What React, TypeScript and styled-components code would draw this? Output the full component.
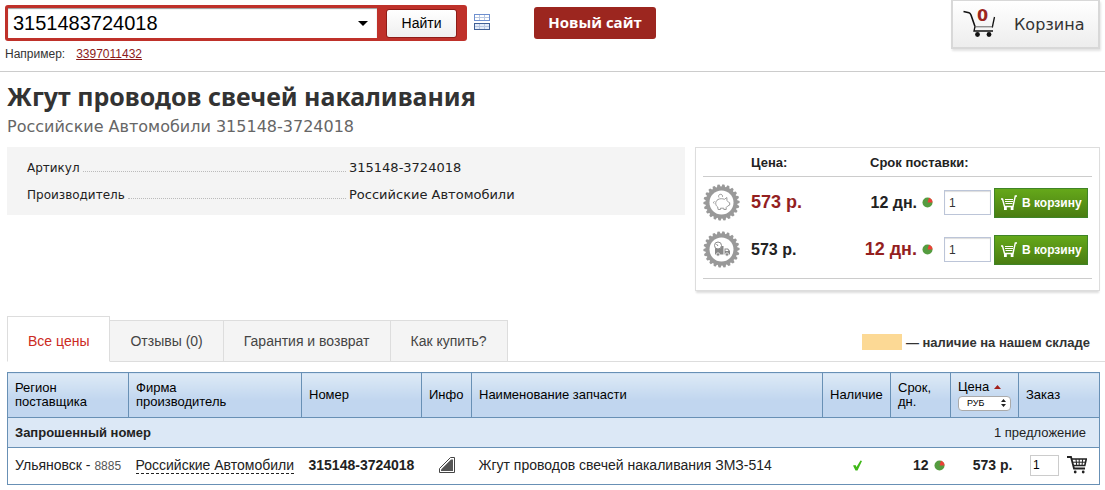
import React from 'react';
import styled, { createGlobalStyle } from 'styled-components';

const GlobalStyle = createGlobalStyle`
  *, *::before, *::after { box-sizing: border-box; }
  body {
    margin: 0;
    background: #fff;
    color: #222;
    font-family: "Liberation Sans", Arial, sans-serif;
    font-size: 14px;
  }
  button, input, select { font-family: inherit; margin: 0; }
  svg { display: block; flex: none; }
`;

const verdana = '"DejaVu Sans", Verdana, sans-serif';

/* ---------- Header ---------- */

const Header = styled.header`
  display: flex;
  align-items: flex-start;
  justify-content: space-between;
  height: 72px;
  padding: 0 5px;
  border-bottom: 1px solid #ccc;
`;

const HeaderLeft = styled.div`
  display: flex;
  align-items: flex-start;
  padding-top: 5px;
`;

const SearchForm = styled.form`
  width: 462px;
`;

const SearchBox = styled.div`
  display: flex;
  align-items: center;
  gap: 9px;
  height: 36px;
  padding: 3px 10px 3px 3px;
  border-radius: 3px;
  background: #bf312a;
`;

const SearchField = styled.div`
  display: flex;
  flex: 1;
  height: 30px;
  background: #fff;
  box-shadow: inset 0 1px 1px #999;
`;

const SearchInput = styled.input`
  flex: 1;
  min-width: 0;
  padding: 0 5px;
  border: 0;
  outline: 0;
  background: transparent;
  color: #000;
  font-size: 20px;
`;

const HistoryButton = styled.button`
  display: flex;
  align-items: center;
  justify-content: center;
  width: 28px;
  padding: 0;
  border: 0;
  background: transparent;
`;

const FindButton = styled.button`
  width: 71px;
  height: 29px;
  padding: 0;
  border: 1px solid #8d1c17;
  border-radius: 3px;
  background: linear-gradient(#fff, #efefef);
  color: #000;
  font-size: 14px;
`;

const Example = styled.p`
  display: flex;
  gap: 11px;
  margin: 5px 0 0;
  font-size: 12px;
  line-height: 16px;
  color: #333;
`;

const ExampleLink = styled.a`
  color: #8b1a1a;
`;

const ListButton = styled.button`
  margin: 9px 44px 0 7px;
  padding: 0;
  border: 0;
  background: transparent;
`;

const NewSiteLink = styled.a`
  width: 122px;
  height: 32px;
  margin-top: 2px;
  border-radius: 3px;
  background: #9c261f;
  color: #fff;
  font: bold 15px/31px "Open Sans", "Noto Sans", sans-serif;
  text-align: center;
  text-decoration: none;
`;

const CartLink = styled.a`
  position: relative;
  display: flex;
  align-items: center;
  gap: 17px;
  width: 149px;
  height: 49px;
  padding-left: 10px;
  border: 2px solid #d8d8d8;
  border-top-width: 1px;
  background: linear-gradient(#fff, #ededed);
  box-shadow: 1px 2px 2px #e4e4e4;
  color: #333;
  font: 16px ${verdana};
  text-decoration: none;
`;

const CartCount = styled.span`
  position: absolute;
  top: 5px;
  left: 24px;
  color: #9c261f;
  font: bold 16px/20px ${verdana};
`;

/* ---------- Product ---------- */

const Main = styled.main`
  padding: 0 5px 0 7px;
`;

const Title = styled.h1`
  margin: 8px 0 0;
  color: #333;
  font: bold 25px/32px "Noto Sans", "Open Sans", sans-serif;
`;

const Subtitle = styled.h2`
  margin: 5px 0 0;
  color: #666;
  font: 16px/20px ${verdana};
`;

const Product = styled.section`
  display: flex;
  align-items: flex-start;
  gap: 10px;
  margin-top: 10px;
`;

const Specs = styled.dl`
  display: grid;
  flex: 1;
  gap: 9px;
  margin: 0;
  padding: 12px 20px 11px;
  background: #f4f4f4;
  font: 13px/18px ${verdana};
`;

const Spec = styled.div`
  display: flex;
`;

const SpecName = styled.dt`
  display: flex;
  gap: 3px;
  width: 322px;
  padding-right: 3px;
  font-size: 12px;
  &::after {
    content: "";
    flex: 1;
    height: 13px;
    border-bottom: 1px dotted #bbb;
  }
`;

const SpecValue = styled.dd`
  margin: 0;
`;

const OfferPanel = styled.div`
  width: 405px;
  padding: 0 7px 11px;
  border: 1px solid #ddd;
  box-shadow: 0 3px 2px -1px #ddd;
`;

const OfferTable = styled.table`
  width: 100%;
  border-bottom: 1px solid #ccc;
  border-spacing: 0;
  table-layout: fixed;
  tbody::before { content: ""; display: block; height: 2px; }
  tbody::after { content: ""; display: block; height: 5px; }
`;

const OfferHead = styled.th<{ $indent?: number }>`
  height: 29px;
  padding: 0 0 0 ${(p) => p.$indent ?? 0}px;
  border-bottom: 1px solid #ccc;
  font-size: 13px;
  text-align: left;
`;

const OfferCell = styled.td`
  height: 47px;
  padding: 0;
`;

const Amount = styled.span<{ $best?: boolean }>`
  color: ${(p) => (p.$best ? '#941f1f' : '#222')};
  font-size: ${(p) => (p.$best ? 18 : 16)}px;
  font-weight: bold;
  white-space: nowrap;
`;

const Term = styled.div`
  display: flex;
  align-items: center;
  justify-content: flex-end;
  gap: 5px;
  padding-right: 11px;
`;

const OfferQty = styled.input`
  display: block;
  width: 47px;
  height: 25px;
  padding: 0 4px;
  border: 1px solid #bcc5d8;
  box-shadow: inset 0 1px 1px #ddd;
  color: #333;
  font-size: 12px;
`;

const BuyButton = styled.button`
  display: flex;
  align-items: center;
  gap: 5px;
  width: 94px;
  height: 30px;
  padding: 0 0 0 6px;
  border: 1px solid #3f8427;
  background: linear-gradient(#65a81a, #4a7d12);
  color: #fff;
  font-size: 12px;
  font-weight: bold;
  white-space: nowrap;
`;

/* ---------- Tabs ---------- */

const TabBar = styled.div`
  display: flex;
  align-items: flex-end;
  justify-content: space-between;
  margin: 25px -5px 0 0;
  padding-right: 15px;
  border-bottom: 1px solid #ddd;
`;

const Tabs = styled.div`
  display: flex;
  align-items: flex-end;
  margin-bottom: -1px;
`;

const Tab = styled.button<{ $active?: boolean }>`
  height: ${(p) => (p.$active ? 46 : 42)}px;
  padding: ${(p) => (p.$active ? '4px 20px 0' : '0 20px')};
  border: 1px solid #ddd;
  border-bottom-color: ${(p) => (p.$active ? '#fff' : '#ddd')};
  border-left-width: ${(p) => (p.$active ? 1 : 0)}px;
  background: ${(p) => (p.$active ? '#fff' : '#f4f4f4')};
  color: ${(p) => (p.$active ? '#cc2a22' : '#444')};
  font-size: 14px;
`;

const Legend = styled.p`
  display: flex;
  align-items: center;
  gap: 4px;
  margin: 0 0 11px;
  color: #333;
  font-size: 13px;
  font-weight: bold;
`;

const Swatch = styled.span`
  width: 40px;
  height: 16px;
  background: #fcd995;
`;

/* ---------- Price table ---------- */

const line = '1px solid #6890b5';

const PriceTable = styled.table`
  width: 100%;
  margin-top: 10px;
  border-collapse: collapse;
  table-layout: fixed;
`;

const HeadCell = styled.th`
  height: 45px;
  padding: 0 7px;
  border: ${line};
  background: linear-gradient(#deeaf6, #c1d6ef 60%);
  color: #000;
  font-size: 13px;
  font-weight: normal;
  line-height: 14px;
  text-align: left;
`;

const GroupRow = styled.tr`
  height: 30px;
  border: ${line};
  background: #dce8f6;
  font-size: 13px;
`;

const GroupName = styled.th`
  padding: 0 7px;
  text-align: left;
`;

const GroupCount = styled.td`
  padding: 0 13px;
  text-align: right;
`;

const DataRow = styled.tr`
  height: 37px;
  border: ${line};
`;

const Cell = styled.td<{ $align?: string; $bold?: boolean }>`
  padding: 0 6px 2px 7px;
  font-weight: ${(p) => (p.$bold ? 'bold' : 'normal')};
  text-align: ${(p) => p.$align ?? 'left'};
  white-space: nowrap;
`;

const OrderCell = styled(Cell)`
  padding-right: 12px;
`;

const Code = styled.span`
  color: #555;
  font-size: 12px;
`;

const MakerLink = styled.a`
  border-bottom: 1px dashed #222;
  color: inherit;
  text-decoration: none;
`;

const Inline = styled.div<{ $justify?: string; $gap?: number }>`
  display: flex;
  align-items: center;
  justify-content: ${(p) => p.$justify ?? 'flex-start'};
  gap: ${(p) => p.$gap ?? 5}px;
`;

const CurrencyWrap = styled.div`
  display: flex;
  align-items: center;
  margin-top: 2px;
  padding-right: 4px;
  width: 53px;
  height: 15px;
  border: 1px solid #aaa;
  border-radius: 4px;
  background: #fff;
`;

const CurrencySelect = styled.select`
  flex: 1;
  min-width: 0;
  height: 13px;
  padding: 0 0 0 8px;
  appearance: none;
  border: 0;
  background: transparent;
  color: #000;
  font-size: 9px;
`;

const RowQty = styled.input`
  width: 29px;
  height: 21px;
  padding: 0 2px;
  border: 1px solid #ccc;
  font-size: 12px;
`;

const IconButton = styled.button`
  padding: 0;
  border: 0;
  background: transparent;
`;

/* ---------- Icons ---------- */

const GridIcon = () => (
  <svg width="16" height="16" viewBox="0 0 16 16">
    {[0, 9].map((y) => (
      <g key={y}>
        <rect x="0" y={y} width="16" height="7" fill={y ? '#3f5f96' : '#6d8fcf'} />
        <rect x="1" y={y + 1} width="14" height="5" fill="#b9c8e2" />
        <path
          d={`M1 ${y + 1}h4v2h-4z M6 ${y + 1}h4v2h-4z M11 ${y + 1}h4v2h-4z M1 ${y + 4}h4v2h-4z M6 ${y + 4}h4v2h-4z M11 ${y + 4}h4v2h-4z`}
          fill={y ? '#e3ebf8' : '#fff'}
        />
      </g>
    ))}
  </svg>
);

const BigCart = () => (
  <svg width="34" height="28" viewBox="0 0 34 28" fill="none" stroke="#111">
    <path d="M.5 1.500l5.500 1.300c1 .3 1.500 1 2 2.200l4 11.500" strokeWidth="1.600" />
    <path d="M29.300 17.500l.7-3.500 1.500-7" strokeWidth="1.300" />
    <path d="M12 16.800h17.300" stroke="#666" />
    <path d="M12 16.500l-1 4.500h19" strokeWidth="1.300" />
    <circle cx="14.500" cy="24.500" r="2.400" fill="#111" stroke="none" />
    <circle cx="26" cy="24.500" r="2.400" fill="#111" stroke="none" />
  </svg>
);

const TEETH = 22;
const gearPoints = Array.from({ length: TEETH }, (_, i) => {
  const at = (r: number, t: number) => {
    const a = ((i + t) / TEETH) * Math.PI * 2;
    return `${(18.5 + r * Math.sin(a)).toFixed(2)},${(18.5 - r * Math.cos(a)).toFixed(2)}`;
  };
  return [at(16, 0), at(18.2, 0.2), at(18, 0.6), at(16, 0.8)].join(' ');
}).join(' ');

const Gear = ({ children }: { children: React.ReactNode }) => (
  <svg width="37" height="37" viewBox="0 0 37 37">
    <polygon points={gearPoints} fill="#999" />
    <circle cx="18.500" cy="18.500" r="12" fill="#fff" />
    {children}
  </svg>
);

const PiggyGear = () => (
  <Gear>
    <g fill="none" stroke="#999" strokeWidth="1">
      <path d="M15 15.500c2-1 4.500-1 6.500-.2l2.300-1.800.2 3 1.800 2 .9.300v2.200l-2 1-1.500 1.500v2h-2.400v-1.300h-3.300v1.300h-2.400l-.4-2.500c-2.700-1.800-2.700-5.700.3-7.500z" />
      <path d="M16 13.500a2 2 0 1 1 3.500-.7M11.500 17.500c-1.200.2-1.300 1.800-.2 2" />
    </g>
  </Gear>
);

const TruckGear = () => (
  <Gear>
    <g fill="#888">
      <path d="M12 15h8.500v8.500H12z M21.500 17.500h3.500l2 2.500v3.500h-5.500z" />
      <circle cx="15" cy="14.500" r="3.500" fill="#fff" stroke="#888" />
      <path d="M15 15l-1.500-2" stroke="#888" fill="none" />
      <path d="M22.500 18.500h2l1 1.500h-3z" fill="#fff" />
      <circle cx="15" cy="23.500" r="1.700" stroke="#fff" strokeWidth=".7" />
      <circle cx="24" cy="23.500" r="1.700" stroke="#fff" strokeWidth=".7" />
    </g>
  </Gear>
);

const PieDot = () => (
  <svg width="11" height="11" viewBox="0 0 11 11">
    <circle cx="5.500" cy="5.500" r="5" fill="#559c40" />
    <path d="M5.500 5.500L7 .8a5 5 0 0 1 3.500 4.700z" fill="#ee4038" />
  </svg>
);

const BuyCart = () => (
  <svg width="16" height="15" viewBox="0 0 16 15" fill="none" stroke="#fff">
    <path d="M0 4h1.500l2 7.500h8.500L14.300 1H16" strokeWidth="1.400" />
    <path d="M4 4.500h8M4 6.500h8M4.500 8.500h7" />
    <path d="M3 11.200h2.800V15H3z M9.700 11.200h2.800V15H9.700z" fill="#fff" stroke="none" />
  </svg>
);

const RowCart = () => (
  <svg width="20" height="18" viewBox="0 0 20 18" fill="none" stroke="#222">
    <path d="M0 1h4l3 11.500h11" strokeWidth="1.800" />
    <path d="M4.500 3h14.800l-1.500 6.500H6.500" strokeWidth="1.600" />
    <path d="M5 6.200h13.500M9 3l.7 6.500M12.200 3v6.500M15.700 3l-.7 6.500" />
    <circle cx="8.200" cy="16" r="1.400" fill="#222" stroke="none" />
    <circle cx="16.200" cy="16" r="1.400" fill="#222" stroke="none" />
  </svg>
);

const PhotoIcon = () => (
  <svg width="16" height="16" viewBox="0 0 16 16">
    <path d="M.5 15.500V11.500L11.500.5h4v15z" fill="#fff" stroke="#444" />
    <path d="M2 14v-1.500L12 2.500h2V14z" fill="#555" />
  </svg>
);

const CheckIcon = () => (
  <svg width="9" height="11" viewBox="0 0 9 11">
    <path d="M0 5.500l2.500-.5 1 2L7.500.5 9 1 4.500 10.500H2.500z" fill="#3fb818" />
  </svg>
);

const SortArrow = () => (
  <svg width="7" height="4" viewBox="0 0 7 4">
    <path d="M3.500 0L7 4H0z" fill="#a3201b" />
  </svg>
);

const Stepper = () => (
  <svg width="5" height="8" viewBox="0 0 5 8">
    <path d="M2.500 0L5 3H0z M2.500 8L5 5H0z" fill="#222" />
  </svg>
);

/* ---------- Data ---------- */

const specs = [
  ['Артикул', '315148-3724018'],
  ['Производитель', 'Российские Автомобили'],
];

const offers = [
  { id: 'cheap', icon: <PiggyGear />, bestPrice: true, bestTerm: false },
  { id: 'fast', icon: <TruckGear />, bestPrice: false, bestTerm: true },
];

const tabs = ['Все цены', 'Отзывы (0)', 'Гарантия и возврат', 'Как купить?'];

export default function App() {
  return (
    <>
      <GlobalStyle />
      <Header>
        <HeaderLeft>
          <SearchForm onSubmit={(e) => e.preventDefault()}>
            <SearchBox>
              <SearchField>
                <SearchInput aria-label="Номер запчасти" defaultValue="3151483724018" />
                <HistoryButton type="button" aria-label="История">
                  <svg width="10" height="5" viewBox="0 0 10 5">
                    <path d="M0 0h10L5 5z" fill="#000" />
                  </svg>
                </HistoryButton>
              </SearchField>
              <FindButton type="submit">Найти</FindButton>
            </SearchBox>
            <Example>
              Например: <ExampleLink href="#example">3397011432</ExampleLink>
            </Example>
          </SearchForm>
          <ListButton type="button" aria-label="Список">
            <GridIcon />
          </ListButton>
          <NewSiteLink href="#new">Новый сайт</NewSiteLink>
        </HeaderLeft>
        <CartLink href="#cart">
          <BigCart />
          <CartCount>0</CartCount>
          Корзина
        </CartLink>
      </Header>

      <Main>
        <Title>Жгут проводов свечей накаливания</Title>
        <Subtitle>Российские Автомобили 315148-3724018</Subtitle>

        <Product>
          <Specs>
            {specs.map(([name, value]) => (
              <Spec key={name}>
                <SpecName>{name}</SpecName>
                <SpecValue>{value}</SpecValue>
              </Spec>
            ))}
          </Specs>
          <OfferPanel>
            <OfferTable>
              <colgroup>
                <col width="48" />
                <col width="109" />
                <col width="84" />
                <col width="50" />
                <col />
              </colgroup>
              <thead>
                <tr>
                  <OfferHead as="td" />
                  <OfferHead>Цена:</OfferHead>
                  <OfferHead colSpan={3} $indent={10}>Срок поставки:</OfferHead>
                </tr>
              </thead>
              <tbody>
                {offers.map((o) => (
                  <tr key={o.id}>
                    <OfferCell>{o.icon}</OfferCell>
                    <OfferCell>
                      <Amount $best={o.bestPrice}>573 р.</Amount>
                    </OfferCell>
                    <OfferCell>
                      <Term>
                        <Amount $best={o.bestTerm}>12 дн.</Amount>
                        <PieDot />
                      </Term>
                    </OfferCell>
                    <OfferCell>
                      <OfferQty aria-label="Количество" defaultValue="1" />
                    </OfferCell>
                    <OfferCell>
                      <BuyButton type="button">
                        <BuyCart />В корзину
                      </BuyButton>
                    </OfferCell>
                  </tr>
                ))}
              </tbody>
            </OfferTable>
          </OfferPanel>
        </Product>

        <TabBar>
          <Tabs role="tablist">
            {tabs.map((t, i) => (
              <Tab key={t} type="button" role="tab" aria-selected={i === 0} $active={i === 0}>
                {t}
              </Tab>
            ))}
          </Tabs>
          <Legend>
            <Swatch />— наличие на нашем складе
          </Legend>
        </TabBar>

        <PriceTable>
          <colgroup>
            <col width="121" />
            <col width="173" />
            <col width="120" />
            <col width="50" />
            <col />
            <col width="68" />
            <col width="60" />
            <col width="68" />
            <col width="81" />
          </colgroup>
          <thead>
            <tr>
              <HeadCell>Регион<br />поставщика</HeadCell>
              <HeadCell>Фирма<br />производитель</HeadCell>
              <HeadCell>Номер</HeadCell>
              <HeadCell>Инфо</HeadCell>
              <HeadCell>Наименование запчасти</HeadCell>
              <HeadCell>Наличие</HeadCell>
              <HeadCell>Срок,<br />дн.</HeadCell>
              <HeadCell>
                <Inline>
                  Цена <SortArrow />
                </Inline>
                <CurrencyWrap>
                  <CurrencySelect aria-label="Валюта">
                    <option>РУБ</option>
                  </CurrencySelect>
                  <Stepper />
                </CurrencyWrap>
              </HeadCell>
              <HeadCell>Заказ</HeadCell>
            </tr>
          </thead>
          <tbody>
            <GroupRow>
              <GroupName colSpan={5}>Запрошенный номер</GroupName>
              <GroupCount colSpan={4}>1 предложение</GroupCount>
            </GroupRow>
            <DataRow>
              <Cell>Ульяновск - <Code>8885</Code></Cell>
              <Cell><MakerLink href="#maker">Российские Автомобили</MakerLink></Cell>
              <Cell $bold>315148-3724018</Cell>
              <Cell>
                <Inline $justify="center"><PhotoIcon /></Inline>
              </Cell>
              <Cell>Жгут проводов свечей накаливания ЗМЗ-514</Cell>
              <Cell>
                <Inline $justify="center"><CheckIcon /></Inline>
              </Cell>
              <Cell $bold>
                <Inline $justify="flex-end">12 <PieDot /></Inline>
              </Cell>
              <Cell $bold $align="right">573 р.</Cell>
              <OrderCell>
                <Inline $justify="flex-end" $gap={8}>
                  <RowQty aria-label="Количество" defaultValue="1" />
                  <IconButton type="button" aria-label="В корзину"><RowCart /></IconButton>
                </Inline>
              </OrderCell>
            </DataRow>
          </tbody>
        </PriceTable>
      </Main>
    </>
  );
}
